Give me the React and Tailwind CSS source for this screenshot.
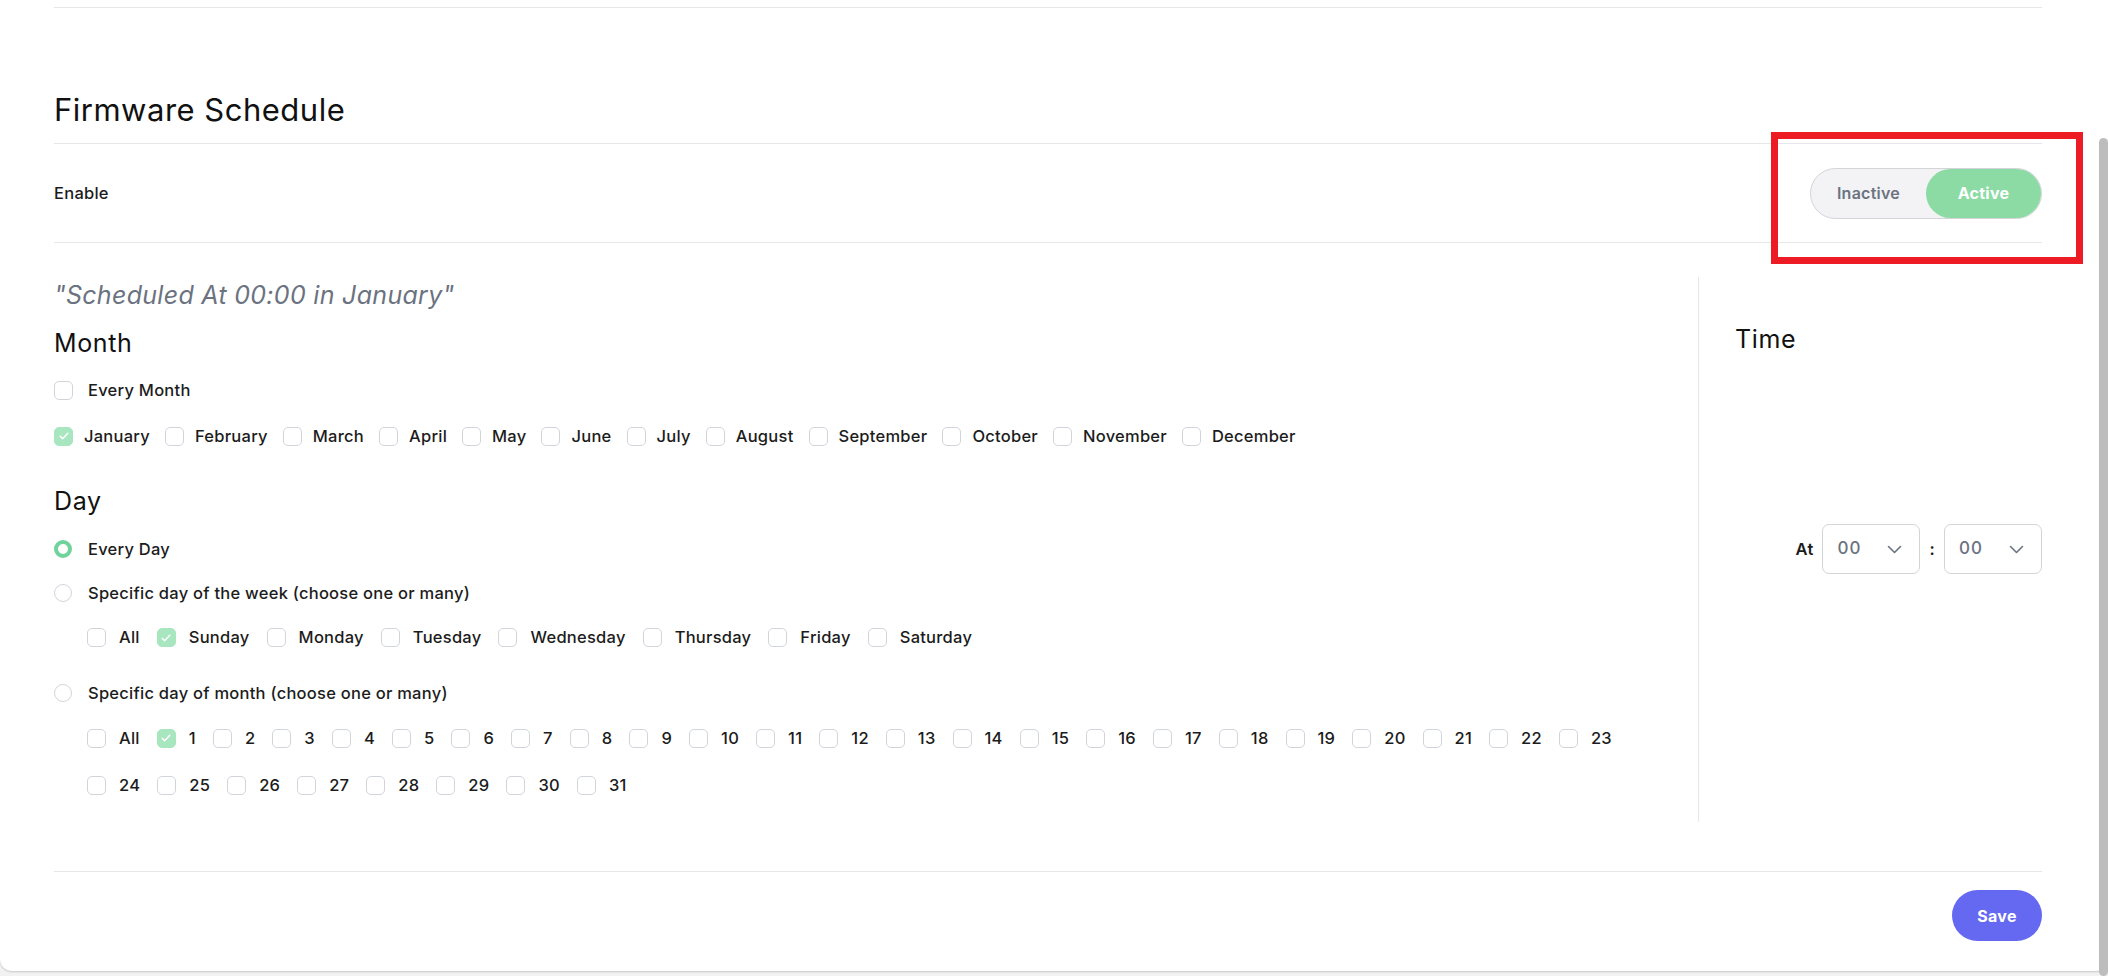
import React from "react";

const months = [
  "January",
  "February",
  "March",
  "April",
  "May",
  "June",
  "July",
  "August",
  "September",
  "October",
  "November",
  "December",
];

const weekdays = ["All", "Sunday", "Monday", "Tuesday", "Wednesday", "Thursday", "Friday", "Saturday"];

const dayRowOne = ["All", ...Array.from({ length: 23 }, (_, i) => String(i + 1))];
const dayRowTwo = Array.from({ length: 8 }, (_, i) => String(i + 24));

const Checkbox = ({ checked }) => (
  <span
    className={`flex h-[19px] w-[19px] shrink-0 items-center justify-center rounded-[5px] border-[1.5px] ${
      checked ? "border-[#a7e6bf] bg-[#a7e6bf]" : "border-[#d1d5db] bg-white"
    }`}
  >
    {checked && (
      <svg width="12" height="12" viewBox="0 0 12 12" fill="none">
        <path d="M2.2 6.3l2.4 2.4 5.2-5.4" stroke="white" strokeWidth="1.5" strokeLinecap="round" strokeLinejoin="round" />
      </svg>
    )}
  </span>
);

const Radio = ({ checked }) => (
  <span
    className={`block h-[18px] w-[18px] shrink-0 rounded-full bg-white ${
      checked ? "border-[4px] border-[#6fd39b]" : "border-[1.5px] border-[#d1d5db]"
    }`}
  />
);

const CheckItem = ({ label, checked, gapClass = "gap-[13px]", mrClass = "mr-[17px]" }) => (
  <label className={`flex items-center ${gapClass} ${mrClass}`}>
    <Checkbox checked={checked} />
    <span>{label}</span>
  </label>
);

const Chevron = () => (
  <svg width="15" height="9" viewBox="0 0 15 9" fill="none">
    <path d="M1.5 1.5l6 6 6-6" stroke="#6b7280" strokeWidth="1.6" strokeLinecap="round" strokeLinejoin="round" />
  </svg>
);

const TimeSelect = ({ value }) => (
  <div className="flex h-[50px] w-[98px] items-center justify-between rounded-[7px] border border-[#d4d4d8] bg-white pl-[14px] pr-[17px]">
    <span className="text-[17px] tracking-[1px] text-[#6b7280]">{value}</span>
    <Chevron />
  </div>
);

export default function App() {
  return (
    <div
      className="relative h-screen w-full overflow-hidden bg-[#f2f2f2] text-[16.5px] font-medium tracking-[0.25px] text-[#1c1c1c]"
      style={{ fontFamily: "Inter, 'Noto Sans', sans-serif" }}
    >
      <div className="h-[971px] rounded-b-[12px] bg-white pl-[54px] pr-[66px] shadow-[0_1px_2px_rgba(0,0,0,0.18)]">
        <div className="h-[8px] border-b border-[#e5e7eb]" />

        {/* Title */}
        <div className="border-b border-[#e5e7eb] pb-[15px] pt-[84px]">
          <h2 className="text-[31px] font-normal leading-[36px] tracking-[0.5px] text-[#111111]">Firmware Schedule</h2>
        </div>

        {/* Enable row */}
        <div className="flex h-[99px] items-center justify-between border-b border-[#e5e7eb]">
          <span>Enable</span>
          <div className="flex h-[51px] w-[232px] rounded-full border border-[#d4d4d8] bg-[#f3f3f6]">
            <span className="flex w-1/2 items-center justify-center text-[16px] font-semibold text-[#6b7280]">
              Inactive
            </span>
            <span className="flex w-1/2 items-center justify-center rounded-full bg-[#8cdba5] text-[16px] font-bold text-white">
              Active
            </span>
          </div>
        </div>

        {/* Schedule */}
        <div className="mt-[34px] flex">
          <div className="flex-1 pb-[27px] pt-[2px]">
            <p className="text-[25px] font-normal italic leading-[32px] tracking-[0.3px] text-[#6b7280]">
              "Scheduled At 00:00 in January"
            </p>

            <h3 className="mt-[16px] text-[25px] font-normal leading-[32px] tracking-[0.6px] text-[#111111]">Month</h3>
            <label className="mt-[22px] flex h-[19px] items-center gap-[15px]">
              <Checkbox checked={false} />
              <span>Every Month</span>
            </label>
            <div className="mt-[26px] flex h-[20px] items-center">
              {months.map((m, i) => (
                <CheckItem key={m} label={m} checked={i === 0} gapClass="gap-[11px]" mrClass="mr-[15px]" />
              ))}
            </div>

            <h3 className="mt-[39px] text-[25px] font-normal leading-[32px] tracking-[0.6px] text-[#111111]">Day</h3>
            <label className="mt-[23px] flex h-[18px] items-center gap-[16px]">
              <Radio checked />
              <span>Every Day</span>
            </label>
            <label className="mt-[26px] flex h-[18px] items-center gap-[16px]">
              <Radio checked={false} />
              <span>Specific day of the week (choose one or many)</span>
            </label>
            <div className="ml-[33px] mt-[26px] flex h-[19px] items-center">
              {weekdays.map((d) => (
                <CheckItem key={d} label={d} checked={d === "Sunday"} />
              ))}
            </div>
            <label className="mt-[37px] flex h-[18px] items-center gap-[16px]">
              <Radio checked={false} />
              <span>Specific day of month (choose one or many)</span>
            </label>
            <div className="ml-[33px] mt-[26px] flex h-[20px] items-center">
              {dayRowOne.map((d) => (
                <CheckItem key={d} label={d} checked={d === "1"} />
              ))}
            </div>
            <div className="ml-[33px] mt-[27px] flex h-[20px] items-center">
              {dayRowTwo.map((d) => (
                <CheckItem key={d} label={d} checked={false} />
              ))}
            </div>
          </div>

          <div className="flex w-[344px] flex-col border-l border-[#e5e7eb] pl-[36px]">
            <h3 className="mt-[46px] text-[25px] font-normal leading-[32px] tracking-[0.6px] text-[#111111]">Time</h3>
            <div className="mt-[169px] flex items-center justify-end">
              <span className="mr-[9px] font-semibold">At</span>
              <TimeSelect value="00" />
              <span className="mx-[9px] font-semibold">:</span>
              <TimeSelect value="00" />
            </div>
          </div>
        </div>

        {/* Footer */}
        <div className="mt-[49px] flex justify-end border-t border-[#e5e7eb] pt-[18px]">
          <button className="h-[51px] w-[90px] rounded-full bg-[#6568f1] text-[16px] font-bold text-white">Save</button>
        </div>
      </div>

      {/* annotation box */}
      <div className="absolute left-[1771px] top-[132px] h-[132px] w-[312px] border-[7px] border-[#ed1c24]" />
      {/* scrollbar thumb */}
      <div className="absolute bottom-0 left-[2099px] top-[138px] w-[9px] rounded-full bg-[#bdbdbd]" />
    </div>
  );
}
